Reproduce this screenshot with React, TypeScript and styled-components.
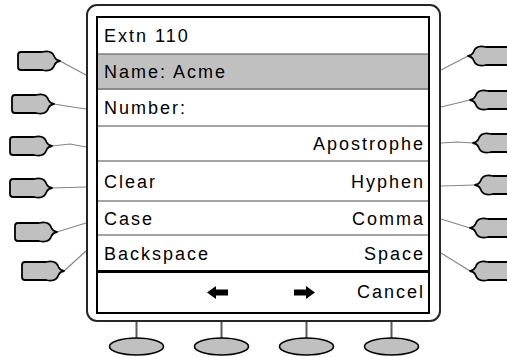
import React from 'react';
import styled, { createGlobalStyle } from 'styled-components';

const GlobalStyle = createGlobalStyle`
  html, body {
    margin: 0;
    padding: 0;
    background: #fff;
  }
  body {
    font-family: "Liberation Sans", Arial, sans-serif;
  }
`;

const Page = styled.div`
  width: 507px;
  height: 357px;
  box-sizing: border-box;
  padding-top: 4px;
  overflow: hidden;
  display: grid;
  grid-template-columns: 86px 355px 66px;
  grid-template-rows: 318px 1fr;
`;

const SideKeys = styled.svg`
  display: block;
  width: 100%;
  height: 100%;
  overflow: visible;
`;

const Frame = styled.div`
  box-sizing: border-box;
  border: 2px solid #262626;
  border-radius: 11px;
  padding: 10px 9px 6px 8px;
  display: flex;
`;

const Display = styled.div`
  flex: 1;
  border: 2px solid #000;
  display: flex;
  flex-direction: column;
  color: #000;
  font-size: 18px;
  letter-spacing: 2px;
`;

const Row = styled.div<{ $shaded?: boolean; $h: number }>`
  box-sizing: border-box;
  height: ${(p) => p.$h}px;
  flex: none;
  display: flex;
  align-items: center;
  justify-content: space-between;
  padding: 2px 3px 0 6px;
  background: ${(p) => (p.$shaded ? '#c0c0c0' : '#fff')};
  border-bottom: 2px solid ${(p) => (p.$shaded ? '#8a8a8a' : '#a4a4a4')};
  ${(p) => p.$shaded && 'border-top: 1px solid #8a8a8a; margin-top: -1px;'}
`;

const SoftRow = styled.div`
  flex: 1;
  border-top: 3px solid #000;
  margin-top: -2px;
  display: grid;
  grid-template-columns: repeat(4, 1fr);
  align-items: center;
`;

const SoftCell = styled.div<{ $align?: 'center' | 'end'; $nudge?: number }>`
  display: flex;
  justify-content: ${(p) => (p.$align === 'end' ? 'flex-end' : 'center')};
  padding-right: ${(p) => p.$nudge ?? 0}px;
  margin-right: ${(p) => (p.$align === 'end' ? 3 : 0)}px;
`;

const BottomKeys = styled.div`
  grid-column: 2;
  display: flex;
  padding-left: 8px;
`;

const BottomKey = styled.svg`
  display: block;
  width: 85px;
  height: 35px;
`;

type Key = { x: number; y: number; wire: string };

const KEY_W = 42;

// key body at x, nose tip at (x + dir * KEY_W, y + 9)
const keyPath = (x: number, y: number, dir: 1 | -1) => {
  const X = (d: number) => x + dir * d;
  return [
    `M${X(3)},${y}`,
    `H${X(24)}`,
    `Q${X(34)},${y - 2.5} ${X(36.5)},${y + 5}`,
    `Q${X(38)},${y + 8.5} ${X(KEY_W)},${y + 9}`,
    `Q${X(38)},${y + 9.5} ${X(36.5)},${y + 13}`,
    `Q${X(34)},${y + 20.5} ${X(24)},${y + 18}`,
    `H${X(3)}`,
    `Q${X(0)},${y + 18} ${X(0)},${y + 15}`,
    `V${y + 3}`,
    `Q${X(0)},${y} ${X(3)},${y}`,
    'Z',
  ].join(' ');
};

const leftKeys: Key[] = [
  { x: 18, y: 52, wire: '60,61 86,75' },
  { x: 12, y: 95, wire: '54,104 66,106 86,109' },
  { x: 10, y: 137, wire: '52,146 70,144 86,147' },
  { x: 10, y: 179, wire: '52,188 86,187' },
  { x: 15, y: 223, wire: '57,232 86,223' },
  { x: 22, y: 262, wire: '64,271 86,251' },
];

// x here is the nose tip; the body runs off to the right
const rightKeys: Key[] = [
  { x: 468, y: 47, wire: '468,56 441,70' },
  { x: 470, y: 91, wire: '470,100 441,107' },
  { x: 473, y: 134, wire: '473,143 457,142 441,143' },
  { x: 475, y: 176, wire: '475,185 441,186' },
  { x: 470, y: 219, wire: '470,228 441,219' },
  { x: 470, y: 262, wire: '470,271 441,253' },
];

const KeyColumn = ({ keys, side }: { keys: Key[]; side: 'left' | 'right' }) => (
  <SideKeys viewBox={side === 'left' ? '0 4 86 318' : '441 4 66 318'}>
    {keys.map((k, i) => (
      <g key={i}>
        <polyline points={k.wire} fill="none" stroke="#858585" strokeWidth={1.2} />
        <path
          d={side === 'left' ? keyPath(k.x, k.y, 1) : keyPath(k.x + KEY_W, k.y, -1)}
          fill="#c0c0c0"
          stroke="#000"
          strokeWidth={1.8}
          strokeLinejoin="round"
        />
      </g>
    ))}
  </SideKeys>
);

const Arrow = ({ dir }: { dir: 'left' | 'right' }) => (
  <svg width="21" height="13" viewBox="0 0 21 13">
    <path
      d="M0,6.5 L9,0 V3.5 H21 V9.5 H9 V13 Z"
      fill="#000"
      transform={dir === 'right' ? 'translate(21,0) scale(-1,1)' : undefined}
    />
  </svg>
);

const SoftKey = () => (
  <BottomKey viewBox="0 0 85 35">
    <line x1="42.5" y1="0" x2="42.5" y2="16" stroke="#5a5a5a" strokeWidth={2} />
    <ellipse cx="42.5" cy="24.5" rx="27" ry="8.5" fill="#c0c0c0" stroke="#000" strokeWidth={1.6} />
  </BottomKey>
);

const lines: { left: string; right: string; h: number; shaded?: boolean }[] = [
  { left: 'Extn 110', right: '', h: 37 },
  { left: 'Name: Acme', right: '', h: 36, shaded: true },
  { left: 'Number:', right: '', h: 37 },
  { left: '', right: 'Apostrophe', h: 35 },
  { left: 'Clear', right: 'Hyphen', h: 40 },
  { left: 'Case', right: 'Comma', h: 34 },
  { left: 'Backspace', right: 'Space', h: 36 },
];

export default function App() {
  return (
    <>
      <GlobalStyle />
      <Page>
        <KeyColumn keys={leftKeys} side="left" />
        <Frame>
          <Display>
            {lines.map((l, i) => (
              <Row key={i} $shaded={l.shaded} $h={l.h}>
                <span>{l.left}</span>
                <span>{l.right}</span>
              </Row>
            ))}
            <SoftRow>
              <SoftCell />
              <SoftCell $nudge={8}>
                <Arrow dir="left" />
              </SoftCell>
              <SoftCell>
                <Arrow dir="right" />
              </SoftCell>
              <SoftCell $align="end">Cancel</SoftCell>
            </SoftRow>
          </Display>
        </Frame>
        <KeyColumn keys={rightKeys} side="right" />
        <BottomKeys>
          <SoftKey />
          <SoftKey />
          <SoftKey />
          <SoftKey />
        </BottomKeys>
      </Page>
    </>
  );
}
